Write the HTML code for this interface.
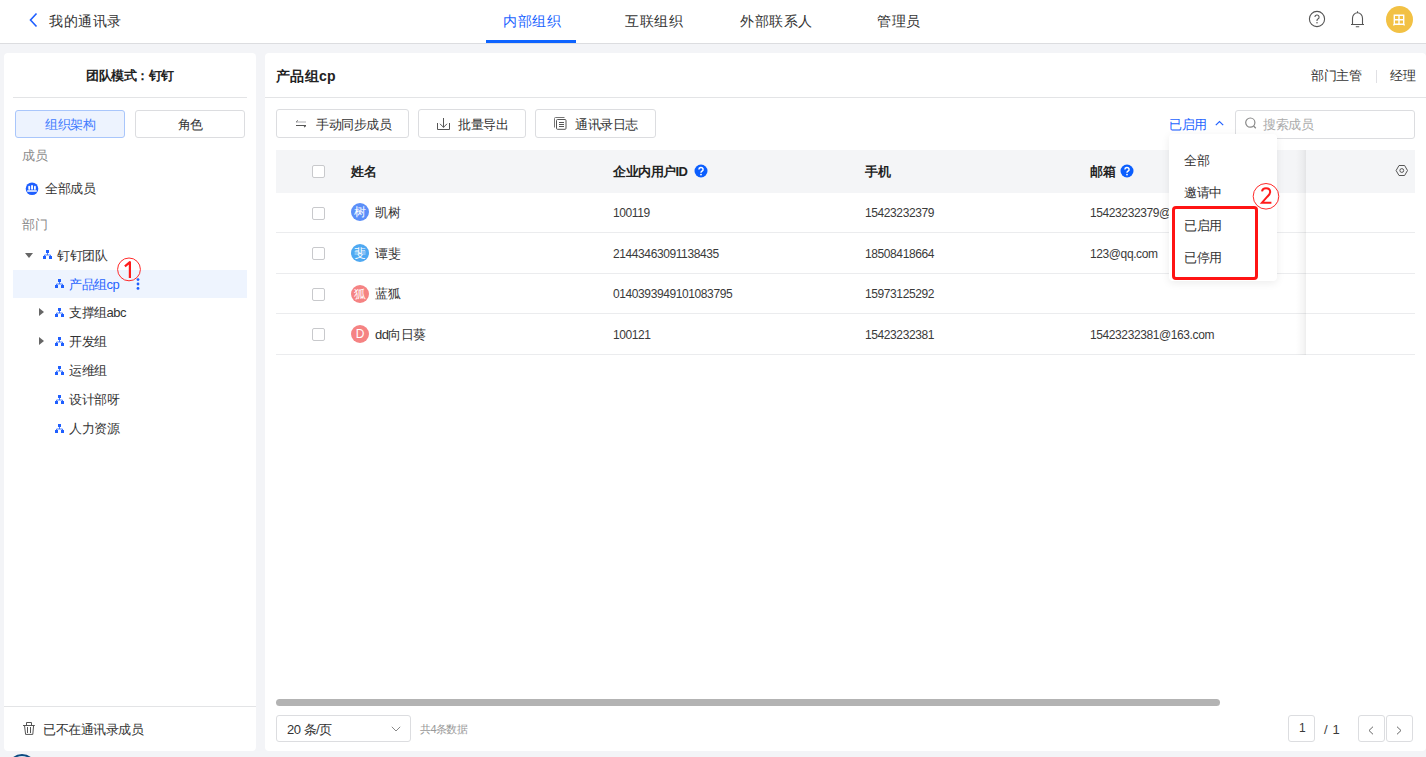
<!DOCTYPE html>
<html><head><meta charset="utf-8">
<style>
*{margin:0;padding:0;box-sizing:border-box}
html,body{width:1426px;height:757px;overflow:hidden;background:#f3f4f7;font-family:"Liberation Sans",sans-serif;color:#333;font-size:13px;letter-spacing:-0.5px}
.a{position:absolute;white-space:nowrap}
#hdr{position:absolute;left:0;top:0;width:1426px;height:44px;background:#fff;border-bottom:1px solid #dcdde0}
.panel{position:absolute;background:#fff;border-radius:4px}
div.a{padding-top:1px}
.btn{border:1px solid #dcdde0;border-radius:3px;background:#fff}
.cb{width:13px;height:13px;border:1px solid #c8c9cc;border-radius:2px;background:#fff}
.th{font-size:13px;line-height:16px;font-weight:bold;color:#222}
.td{font-size:13px;line-height:16px;color:#333}
.tn{font-size:12px;line-height:14px;color:#3a3a3a;letter-spacing:-0.4px}
.av{width:18px;height:18px;border-radius:50%;color:#fff;font-size:12px;line-height:17px;text-align:center;letter-spacing:0;overflow:hidden}
</style></head><body>

<!-- header -->
<div id="hdr">
  <svg class="a" style="left:28px;top:12px" width="11" height="16" viewBox="0 0 11 16"><path d="M8.5 1.5 L2.5 8 L8.5 14.5" fill="none" stroke="#1f5fff" stroke-width="1.6"/></svg>
  <div class="a" style="left:49px;top:11px;font-size:14px;line-height:18px;letter-spacing:0.5px;color:#333">我的通讯录</div>
  <div class="a" style="left:503px;top:11px;font-size:14px;line-height:18px;letter-spacing:0.5px;color:#1a63ff">内部组织</div>
  <div class="a" style="left:486px;top:40px;width:90px;height:3px;background:#0d63ff"></div>
  <div class="a" style="left:625px;top:11px;font-size:14px;line-height:18px;letter-spacing:0.5px;color:#333">互联组织</div>
  <div class="a" style="left:740px;top:11px;font-size:14px;line-height:18px;letter-spacing:0.5px;color:#333">外部联系人</div>
  <div class="a" style="left:877px;top:11px;font-size:14px;line-height:18px;letter-spacing:0.5px;color:#333">管理员</div>
  <svg class="a" style="left:1308px;top:10px" width="18" height="18" viewBox="0 0 18 18"><circle cx="9" cy="9" r="7.6" fill="none" stroke="#555" stroke-width="1.1"/><path d="M6.9 7.1a2.1 2.1 0 1 1 3 1.9c-0.6 0.3-0.9 0.7-0.9 1.4v0.5" fill="none" stroke="#555" stroke-width="1.1"/><circle cx="9" cy="12.8" r="0.75" fill="#555"/></svg>
  <svg class="a" style="left:1350px;top:10px" width="15" height="18" viewBox="0 0 15 18"><path d="M7.5 1.2v1.3M2.5 14.5V8.2a5 5.5 0 0 1 10 0v6.3M1 14.5h13M5.8 16.8h3.4" fill="none" stroke="#555" stroke-width="1.1"/></svg>
  <div class="a" style="left:1386px;top:6px;width:27px;height:27px;border-radius:50%;background:#f2c144"></div>
  <svg class="a" style="left:1393px;top:14px" width="12" height="12" viewBox="0 0 12 12"><path d="M1.3 1.3h9.4v9H1.3zM6 1.3v9M1.3 5.8h9.4M0.8 10.3v1.2M11.2 10.3v1.2" fill="none" stroke="#fff" stroke-width="1.4"/></svg>
</div>

<!-- left panel -->
<div class="panel" style="left:4px;top:53px;width:252px;height:698px">
</div>
<div class="a" style="left:86px;top:67px;font-size:13px;line-height:16px;font-weight:bold;color:#222">团队模式：钉钉</div>
<div class="a" style="left:13px;top:97px;width:234px;height:1px;background:#e3e4e6"></div>
<div class="a" style="left:15px;top:110px;width:110px;height:28px;border:1px solid #a9c6fb;background:#edf3fe;border-radius:3px;color:#3f7bff;font-size:13px;line-height:26px;text-align:center">组织架构</div>
<div class="a" style="left:135px;top:110px;width:110px;height:28px;border:1px solid #dcdde0;background:#fff;border-radius:3px;color:#333;font-size:13px;line-height:26px;text-align:center">角色</div>
<div class="a" style="left:22px;top:147px;font-size:13px;line-height:16px;color:#8a8a8a">成员</div>
<svg class="a" style="left:25px;top:182px" width="14" height="14" viewBox="0 0 14 14"><circle cx="7" cy="6.8" r="6.3" fill="#1f5fff"/><g fill="#fff"><rect x="3.3" y="3.8" width="1.8" height="4" rx="0.9"/><rect x="6.1" y="3" width="1.9" height="4.8" rx="0.95"/><rect x="9" y="3.8" width="1.8" height="4" rx="0.9"/><rect x="2" y="8.2" width="10" height="1.5" rx="0.75"/></g></svg>
<div class="a" style="left:45px;top:180px;font-size:13px;line-height:16px;color:#333">全部成员</div>
<div class="a" style="left:22px;top:216px;font-size:13px;line-height:16px;color:#8a8a8a">部门</div>

<svg class="a" style="left:25px;top:253px" width="8" height="5" viewBox="0 0 8 5"><path d="M0 0h8L4 5z" fill="#666"/></svg>
<svg class="a" style="left:43px;top:250px" width="9" height="9" viewBox="0 0 9 9"><g fill="#1f5fff"><rect x="3" y="0" width="3" height="3"/><rect x="0" y="6" width="3" height="3"/><rect x="6" y="6" width="3" height="3"/></g><path d="M4.5 3v2M1.5 6V5h6v1" fill="none" stroke="#1f5fff" stroke-width="0.8"/></svg>
<div class="a" style="left:57px;top:247px;font-size:13px;line-height:16px;color:#333">钉钉团队</div>

<div class="a" style="left:13px;top:270px;width:234px;height:28px;background:#eef4fe"></div>
<svg class="a" style="left:55px;top:279px" width="9" height="9" viewBox="0 0 9 9"><g fill="#1f5fff"><rect x="3" y="0" width="3" height="3"/><rect x="0" y="6" width="3" height="3"/><rect x="6" y="6" width="3" height="3"/></g><path d="M4.5 3v2M1.5 6V5h6v1" fill="none" stroke="#1f5fff" stroke-width="0.8"/></svg>
<div class="a" style="left:69px;top:276px;font-size:13px;line-height:16px;color:#1f63ff">产品组cp</div>
<svg class="a" style="left:136px;top:278px" width="4" height="12" viewBox="0 0 4 12"><g fill="#1f5fff"><circle cx="2" cy="1.6" r="1.4"/><circle cx="2" cy="6" r="1.4"/><circle cx="2" cy="10.4" r="1.4"/></g></svg>
<svg class="a" style="left:116px;top:256px" width="26" height="27" viewBox="0 0 26 27"><circle cx="13" cy="13.4" r="11.4" fill="none" stroke="#ff2a2a" stroke-width="1"/><path d="M8.9 10.3L13.9 6.2V22" fill="none" stroke="#ff1a1a" stroke-width="2.2" stroke-linejoin="round"/></svg>

<svg class="a" style="left:39px;top:308px" width="5" height="8" viewBox="0 0 5 8"><path d="M0 0v8l5-4z" fill="#666"/></svg>
<svg class="a" style="left:55px;top:308px" width="9" height="9" viewBox="0 0 9 9"><g fill="#1f5fff"><rect x="3" y="0" width="3" height="3"/><rect x="0" y="6" width="3" height="3"/><rect x="6" y="6" width="3" height="3"/></g><path d="M4.5 3v2M1.5 6V5h6v1" fill="none" stroke="#1f5fff" stroke-width="0.8"/></svg>
<div class="a" style="left:69px;top:304px;font-size:13px;line-height:16px;color:#333">支撑组abc</div>

<svg class="a" style="left:39px;top:337px" width="5" height="8" viewBox="0 0 5 8"><path d="M0 0v8l5-4z" fill="#666"/></svg>
<svg class="a" style="left:55px;top:337px" width="9" height="9" viewBox="0 0 9 9"><g fill="#1f5fff"><rect x="3" y="0" width="3" height="3"/><rect x="0" y="6" width="3" height="3"/><rect x="6" y="6" width="3" height="3"/></g><path d="M4.5 3v2M1.5 6V5h6v1" fill="none" stroke="#1f5fff" stroke-width="0.8"/></svg>
<div class="a" style="left:69px;top:333px;font-size:13px;line-height:16px;color:#333">开发组</div>

<svg class="a" style="left:55px;top:366px" width="9" height="9" viewBox="0 0 9 9"><g fill="#1f5fff"><rect x="3" y="0" width="3" height="3"/><rect x="0" y="6" width="3" height="3"/><rect x="6" y="6" width="3" height="3"/></g><path d="M4.5 3v2M1.5 6V5h6v1" fill="none" stroke="#1f5fff" stroke-width="0.8"/></svg>
<div class="a" style="left:69px;top:362px;font-size:13px;line-height:16px;color:#333">运维组</div>

<svg class="a" style="left:55px;top:395px" width="9" height="9" viewBox="0 0 9 9"><g fill="#1f5fff"><rect x="3" y="0" width="3" height="3"/><rect x="0" y="6" width="3" height="3"/><rect x="6" y="6" width="3" height="3"/></g><path d="M4.5 3v2M1.5 6V5h6v1" fill="none" stroke="#1f5fff" stroke-width="0.8"/></svg>
<div class="a" style="left:69px;top:391px;font-size:13px;line-height:16px;color:#333">设计部呀</div>

<svg class="a" style="left:55px;top:424px" width="9" height="9" viewBox="0 0 9 9"><g fill="#1f5fff"><rect x="3" y="0" width="3" height="3"/><rect x="0" y="6" width="3" height="3"/><rect x="6" y="6" width="3" height="3"/></g><path d="M4.5 3v2M1.5 6V5h6v1" fill="none" stroke="#1f5fff" stroke-width="0.8"/></svg>
<div class="a" style="left:69px;top:420px;font-size:13px;line-height:16px;color:#333">人力资源</div>

<div class="a" style="left:4px;top:706px;width:252px;height:1px;background:#e3e4e6"></div>
<svg class="a" style="left:22px;top:721px" width="14" height="15" viewBox="0 0 14 15"><path d="M1 4.5h11.8M4.5 4.5V1.5h5v3M2.5 4.5l1.1 8.9h7.2l0.8-8.9M5.5 6v6M8.5 6v6" fill="none" stroke="#555" stroke-width="1"/></svg>
<div class="a" style="left:43px;top:721px;font-size:13px;line-height:16px;color:#333">已不在通讯录成员</div>
<svg class="a" style="left:2px;top:750px" width="40" height="7" viewBox="0 0 40 7"><circle cx="20" cy="18.5" r="14.1" fill="#d6ebf8" stroke="#fff" stroke-width="1.5"/><circle cx="20" cy="18.5" r="13.5" fill="none" stroke="#0d4a80" stroke-width="2"/></svg>

<!-- right panel -->
<div class="panel" style="left:265px;top:53px;width:1161px;height:698px"></div>
<div class="a" style="left:276px;top:67px;font-size:14px;line-height:17px;letter-spacing:0.3px;font-weight:bold;color:#222">产品组cp</div>
<div class="a" style="left:1311px;top:67px;font-size:13px;line-height:16px;color:#333">部门主管</div>
<div class="a" style="left:1376px;top:70px;width:1px;height:13px;background:#e0e0e4"></div>
<div class="a" style="left:1390px;top:67px;font-size:13px;line-height:16px;color:#333">经理</div>
<div class="a" style="left:265px;top:97px;width:1161px;height:1px;background:#e3e4e6"></div>

<div class="a btn" style="left:276px;top:109px;width:133px;height:29px"></div>
<svg class="a" style="left:295px;top:118px" width="12" height="10" viewBox="0 0 12 10"><path d="M1 4h10" stroke="#b5b5b8" stroke-width="1.1"/><path d="M1.2 4L2.9 2.4" stroke="#666" stroke-width="1"/><path d="M1 7.5h10M10.8 7.5L9.1 9.1" fill="none" stroke="#555" stroke-width="1.1"/></svg>
<div class="a" style="left:316px;top:116px;font-size:13px;line-height:16px;color:#333">手动同步成员</div>

<div class="a btn" style="left:418px;top:109px;width:108px;height:29px"></div>
<svg class="a" style="left:437px;top:117px" width="14" height="14" viewBox="0 0 14 14"><path d="M6.5 1v9.5M3 6.8l3.5 3.5 3.5-3.5M0.5 6v6.5h12V6" fill="none" stroke="#555" stroke-width="1"/></svg>
<div class="a" style="left:458px;top:116px;font-size:13px;line-height:16px;color:#333">批量导出</div>

<div class="a btn" style="left:535px;top:109px;width:121px;height:29px"></div>
<svg class="a" style="left:554px;top:117px" width="14" height="14" viewBox="0 0 14 14"><path d="M0.5 10.5V1.5a1 1 0 0 1 1-1h9" fill="none" stroke="#777" stroke-width="1"/><rect x="2.5" y="2.5" width="9.5" height="9.8" rx="1" fill="#fff" stroke="#555" stroke-width="1"/><path d="M5 5.5h5M5 7.5h5M5 9.5h5" stroke="#555" stroke-width="1"/></svg>
<div class="a" style="left:575px;top:116px;font-size:13px;line-height:16px;color:#333">通讯录日志</div>

<div class="a" style="left:1169px;top:116px;font-size:13px;line-height:16px;color:#2563ff">已启用</div>
<svg class="a" style="left:1215px;top:120px" width="9" height="6" viewBox="0 0 9 6"><path d="M0.8 5.2L4.5 1.5l3.7 3.7" fill="none" stroke="#2563ff" stroke-width="1.2"/></svg>
<div class="a" style="left:1235px;top:110px;width:180px;height:29px;border:1px solid #dcdde0;border-radius:3px"></div>
<svg class="a" style="left:1245px;top:117px" width="13" height="13" viewBox="0 0 13 13"><circle cx="5.3" cy="5.6" r="4.6" fill="none" stroke="#888" stroke-width="1.2"/><path d="M8.6 9l2.2 2.2" stroke="#888" stroke-width="1.3"/></svg>
<div class="a" style="left:1263px;top:116px;font-size:13px;line-height:16px;color:#aaa">搜索成员</div>

<!-- table -->
<div class="a" style="left:276px;top:150px;width:1139px;height:43px;background:#f4f5f7"></div>
<div class="a" style="left:276px;top:232px;width:1139px;height:1px;background:#ebecee"></div>
<div class="a" style="left:276px;top:273px;width:1139px;height:1px;background:#ebecee"></div>
<div class="a" style="left:276px;top:313px;width:1139px;height:1px;background:#ebecee"></div>
<div class="a" style="left:276px;top:354px;width:1139px;height:1px;background:#ebecee"></div>

<div class="a cb" style="left:312px;top:165px"></div>
<div class="a th" style="left:351px;top:163px">姓名</div>
<div class="a th" style="left:613px;top:163px">企业内用户ID</div>
<svg class="a" style="left:694px;top:164px" width="14" height="14" viewBox="0 0 14 14"><circle cx="7" cy="7" r="6.5" fill="#0b5efe"/><path d="M4.9 5.4a2.1 2 0 1 1 3 1.8c-0.7 0.4-0.9 0.7-0.9 1.5" fill="none" stroke="#fff" stroke-width="1.5"/><circle cx="7" cy="10.6" r="0.9" fill="#fff"/></svg>
<div class="a th" style="left:865px;top:163px">手机</div>
<div class="a th" style="left:1090px;top:163px">邮箱</div>
<svg class="a" style="left:1120px;top:164px" width="14" height="14" viewBox="0 0 14 14"><circle cx="7" cy="7" r="6.5" fill="#0b5efe"/><path d="M4.9 5.4a2.1 2 0 1 1 3 1.8c-0.7 0.4-0.9 0.7-0.9 1.5" fill="none" stroke="#fff" stroke-width="1.5"/><circle cx="7" cy="10.6" r="0.9" fill="#fff"/></svg>

<div class="a" style="left:1296px;top:150px;width:10px;height:205px;background:linear-gradient(to right,rgba(0,0,0,0),rgba(0,0,0,0.035) 70%,rgba(0,0,0,0.07))"></div>
<svg class="a" style="left:1395px;top:164px" width="14" height="13" viewBox="0 0 14 13"><path d="M4 1.5h5.6l2.9 5-2.9 5H4L1.1 6.5z" fill="none" stroke="#555" stroke-width="1"/><circle cx="6.8" cy="6.5" r="1.9" fill="none" stroke="#555" stroke-width="1"/></svg>

<div class="a cb" style="left:312px;top:207px"></div>
<div class="a av" style="left:351px;top:203px;background:#5b8ff9">树</div>
<div class="a td" style="left:375px;top:204px">凯树</div>
<div class="a tn" style="left:613px;top:205px">100119</div>
<div class="a tn" style="left:865px;top:205px">15423232379</div>
<div class="a tn" style="left:1090px;top:205px">15423232379@163.com</div>

<div class="a cb" style="left:312px;top:247px"></div>
<div class="a av" style="left:351px;top:244px;background:#4fa9f2">斐</div>
<div class="a td" style="left:375px;top:245px">谭斐</div>
<div class="a tn" style="left:613px;top:246px">21443463091138435</div>
<div class="a tn" style="left:865px;top:246px">18508418664</div>
<div class="a tn" style="left:1090px;top:246px">123@qq.com</div>

<div class="a cb" style="left:312px;top:288px"></div>
<div class="a av" style="left:351px;top:285px;background:#f58383">狐</div>
<div class="a td" style="left:375px;top:285px">蓝狐</div>
<div class="a tn" style="left:613px;top:286px">0140393949101083795</div>
<div class="a tn" style="left:865px;top:286px">15973125292</div>

<div class="a cb" style="left:312px;top:328px"></div>
<div class="a av" style="left:351px;top:325px;background:#f58383;font-family:'Liberation Sans',sans-serif">D</div>
<div class="a td" style="left:375px;top:326px">dd向日葵</div>
<div class="a tn" style="left:613px;top:327px">100121</div>
<div class="a tn" style="left:865px;top:327px">15423232381</div>
<div class="a tn" style="left:1090px;top:327px">15423232381@163.com</div>

<!-- dropdown -->
<div class="a" style="left:1169px;top:134px;width:108px;height:147px;background:#fff;border-radius:4px;box-shadow:0 2px 8px rgba(0,0,0,0.08)"></div>
<div class="a td" style="left:1184px;top:152px">全部</div>
<div class="a td" style="left:1184px;top:184px">邀请中</div>
<div class="a td" style="left:1184px;top:217px">已启用</div>
<div class="a td" style="left:1184px;top:249px">已停用</div>
<div class="a" style="left:1172px;top:206px;width:86px;height:74px;border:3px solid #ff1414;border-radius:4px"></div>
<svg class="a" style="left:1252px;top:183px" width="28" height="28" viewBox="0 0 28 28"><circle cx="14" cy="13.3" r="12.8" fill="none" stroke="#ff2a2a" stroke-width="1"/><path d="M10 8.3C10.3 6.3 11.8 5.2 14 5.2C16.4 5.2 18.2 6.6 18.2 8.9C18.2 10.8 17 12 15.3 13.7L10 19.7H19.4" fill="none" stroke="#ff1a1a" stroke-width="2"/></svg>

<!-- scrollbar & footer -->
<div class="a" style="left:276px;top:699px;width:944px;height:7px;background:#b3b3b3;border-radius:4px"></div>
<div class="a" style="left:276px;top:715px;width:135px;height:27px;border:1px solid #dcdde0;border-radius:3px"></div>
<div class="a" style="left:287px;top:721px;font-size:13px;line-height:16px;color:#333">20 条/页</div>
<svg class="a" style="left:391px;top:726px" width="10" height="6" viewBox="0 0 10 6"><path d="M0.8 0.8L5 5l4.2-4.2" fill="none" stroke="#888" stroke-width="1"/></svg>
<div class="a" style="left:420px;top:721px;font-size:11px;line-height:14px;color:#999;letter-spacing:-0.6px">共4条数据</div>

<div class="a" style="left:1288px;top:715px;width:27px;height:27px;border:1px solid #dcdde0;border-radius:3px"></div>
<div class="a tn" style="left:1299px;top:720px">1</div>
<div class="a tn" style="left:1324px;top:722px;font-size:13px;letter-spacing:0.6px">/ 1</div>
<div class="a" style="left:1358px;top:715px;width:27px;height:27px;border:1px solid #dcdde0;border-radius:3px"></div>
<svg class="a" style="left:1368px;top:726px" width="6" height="9" viewBox="0 0 6 9"><path d="M5 0.7L1 4.5l4 3.8" fill="none" stroke="#666" stroke-width="1"/></svg>
<div class="a" style="left:1386px;top:715px;width:27px;height:27px;border:1px solid #dcdde0;border-radius:3px"></div>
<svg class="a" style="left:1396px;top:726px" width="6" height="9" viewBox="0 0 6 9"><path d="M1 0.7l4 3.8-4 3.8" fill="none" stroke="#666" stroke-width="1"/></svg>

</body></html>
